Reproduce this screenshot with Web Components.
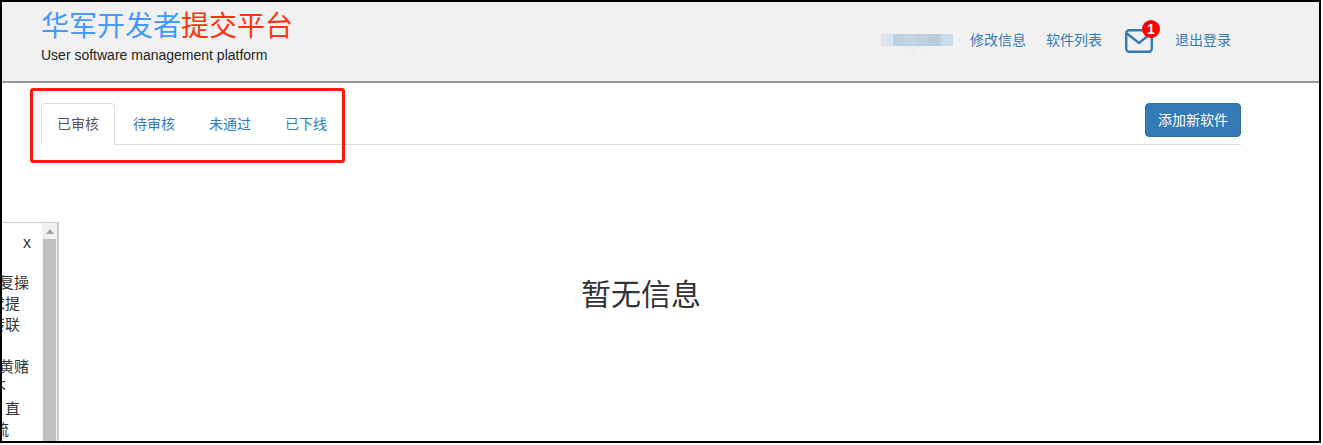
<!DOCTYPE html>
<html lang="zh-CN">
<head>
<meta charset="utf-8">
<title>华军开发者提交平台</title>
<style>
  html, body { margin: 0; background: #fff; }
  body { font: 14px/20px "Liberation Sans", "Noto Sans CJK SC", sans-serif; color: #333; }
</style>
</head>
<body>
<dev-page>
  <site-header></site-header>
  <tab-bar>
    <tab-item active>已审核</tab-item>
    <tab-item>待审核</tab-item>
    <tab-item>未通过</tab-item>
    <tab-item>已下线</tab-item>
    <add-button slot="action">添加新软件</add-button>
  </tab-bar>
  <empty-note>暂无信息</empty-note>
  <side-notice></side-notice>
</dev-page>

<script>
const FONT = `"Liberation Sans", "Noto Sans CJK SC", sans-serif`;

/* outer frame of the screenshot, red mark sits on top of the tabs */
class DevPage extends HTMLElement {
  constructor() {
    super();
    this.attachShadow({ mode: "open" }).innerHTML = `
    <style>
      :host {
        display: flex;
        flex-direction: column;
        position: relative;
        box-sizing: border-box;
        width: 1321px;
        height: 443px;
        overflow: hidden;
        background: #fff;
        border: 2px solid #000;
        font: 14px/20px ${FONT};
      }
      .mark {
        position: absolute;
        left: 28px;
        top: 86px;
        width: 315px;
        height: 75px;
        box-sizing: border-box;
        border: 3px solid #ff1a0d;
        border-radius: 3px;
      }
    </style>
    <slot></slot>
    <div class="mark"></div>
    `;
  }
}
customElements.define("dev-page", DevPage);

class SiteHeader extends HTMLElement {
  get blurCells() {
    let top = ["#dde3ec", "#bed1e3", "#c6d4e4", "#c1d0e2", "#bccbdd", "#ccdbe8"];
    let low = ["#f1f1f1", "#f1f1f1", "#eceef0", "#eff0f1", "#f0f1f1", "#f1f1f1"];
    let row = (cols, h) => `<div class="row" style="height:${h}px">` +
      cols.map(c => `<i style="background:${c}"></i>`).join("") + `</div>`;
    return row(top, 12) + row(low, 10);
  }

  constructor() {
    super();
    this.attachShadow({ mode: "open" }).innerHTML = `
    <style>
      :host {
        display: flex;
        justify-content: space-between;
        flex: none;
        box-sizing: border-box;
        height: 81px;
        padding: 0 88px 0 39px;
        background: #f1f1f1;
        border-bottom: 2px solid #999;
      }
      .brand { display: flex; flex-direction: column; padding-top: 6px; }
      .title { font-size: 28px; line-height: 38px; color: #4499ff; white-space: nowrap; }
      .title b { font-weight: 400; color: #ff3311; }
      .sub { font-size: 14px; line-height: 20px; color: #222; margin-top: -1px; }
      nav { display: flex; align-items: center; height: 76px; }
      a { color: #337ab7; text-decoration: none; white-space: nowrap; }
      .blur { width: 72px; margin: 10px 17px 0 0; height: 22px; }
      .row { display: flex; }
      .row i { flex: 1; }
      .mail { position: relative; width: 28px; height: 24px; margin: 2px 22px 0 23px; }
      .mail svg { display: block; }
      .badge {
        position: absolute;
        left: 17px;
        top: -9px;
        width: 18px;
        height: 18px;
        border-radius: 50%;
        background: #f00;
        color: #fff;
        font: 700 14px/18px "Liberation Sans", sans-serif;
        text-align: center;
      }
      .gap { margin-right: 20px; }
    </style>
    <div class="brand">
      <div class="title">华军开发者<b>提交平台</b></div>
      <div class="sub">User software management platform</div>
    </div>
    <nav>
      <div class="blur">${this.blurCells}</div>
      <a class="gap" href="#">修改信息</a>
      <a href="#">软件列表</a>
      <div class="mail">
        <svg width="28" height="24" viewBox="0 0 28 24" fill="none" stroke="#337ab7" stroke-width="2.4">
          <rect x="1.2" y="1.2" width="25.6" height="21.6" rx="3"/>
          <path d="M2 4.5 14 14 26 4.5"/>
        </svg>
        <span class="badge">1</span>
      </div>
      <a href="#">退出登录</a>
    </nav>
    `;
  }
}
customElements.define("site-header", SiteHeader);

class TabBar extends HTMLElement {
  constructor() {
    super();
    this.attachShadow({ mode: "open" }).innerHTML = `
    <style>
      :host {
        display: flex;
        justify-content: space-between;
        flex: none;
        box-sizing: border-box;
        width: 1200px;
        height: 42px;
        margin: 20px 0 0 39px;
        border-bottom: 1px solid #ddd;
      }
      .tabs { display: flex; gap: 2px; }
    </style>
    <div class="tabs"><slot></slot></div>
    <slot name="action"></slot>
    `;
  }
}
customElements.define("tab-bar", TabBar);

class TabItem extends HTMLElement {
  constructor() {
    super();
    this.attachShadow({ mode: "open" }).innerHTML = `
    <style>
      :host {
        display: block;
        box-sizing: border-box;
        height: 42px;
        padding: 10px 15px;
        border: 1px solid transparent;
        border-radius: 4px 4px 0 0;
        color: #337ab7;
        white-space: nowrap;
      }
      :host([active]) {
        color: #555;
        background: #fff;
        border-color: #ddd #ddd #fff;
      }
    </style>
    <slot></slot>
    `;
  }
}
customElements.define("tab-item", TabItem);

class AddButton extends HTMLElement {
  constructor() {
    super();
    this.attachShadow({ mode: "open" }).innerHTML = `
    <style>
      :host {
        display: block;
        box-sizing: border-box;
        height: 34px;
        padding: 6px 12px;
        color: #fff;
        background: #337ab7;
        border: 1px solid #2e6da4;
        border-radius: 4px;
        white-space: nowrap;
      }
    </style>
    <slot></slot>
    `;
  }
}
customElements.define("add-button", AddButton);

class EmptyNote extends HTMLElement {
  constructor() {
    super();
    this.attachShadow({ mode: "open" }).innerHTML = `
    <style>
      :host {
        display: block;
        margin-top: 128px;
        font-size: 30px;
        line-height: 44px;
        color: #333;
        text-align: center;
        padding-right: 39px;
      }
    </style>
    <slot></slot>
    `;
  }
}
customElements.define("empty-note", EmptyNote);

/* floating notice on the left, mostly pushed off the page */
class SideNotice extends HTMLElement {
  get lines() {
    return [
      ["复操", 13], ["求提", 22], ["转联", 22], ["", 0],
      ["黄赌", 13], ["不", 36], ["直", 22], ["流", 33]
    ];
  }

  constructor() {
    super();
    let rows = this.lines.map(([t, r]) => `<div class="line" style="padding-right:${r}px">${t}</div>`).join("");
    this.attachShadow({ mode: "open" }).innerHTML = `
    <style>
      :host {
        position: absolute;
        left: 0;
        top: 220px;
        width: 57px;
        height: 219px;
        box-sizing: border-box;
        display: flex;
        background: #fff;
        border: solid #ccc;
        border-width: 1px 2px 0 0;
        overflow: hidden;
      }
      .body { flex: 1; min-width: 0; font-size: 15px; line-height: 21px; color: #333; overflow: hidden; }
      .close { height: 49px; padding: 10px 11px 0 0; box-sizing: border-box; text-align: right; font-size: 16px; line-height: 20px; }
      .line { display: flex; justify-content: flex-end; height: 21px; white-space: nowrap; }
      .bar { flex: none; width: 15px; background: #f1f1f1; display: flex; flex-direction: column; align-items: center; }
      .arrow { width: 0; height: 0; margin: 6px 0 5px; border: 4px solid transparent; border-top: 0; border-bottom: 5px solid #a3a3a3; }
      .thumb { flex: 1; width: 13px; background: #c1c1c1; }
    </style>
    <div class="body">
      <div class="close">x</div>
      ${rows}
    </div>
    <div class="bar"><div class="arrow"></div><div class="thumb"></div></div>
    `;
  }
}
customElements.define("side-notice", SideNotice);
</script>
</body>
</html>
